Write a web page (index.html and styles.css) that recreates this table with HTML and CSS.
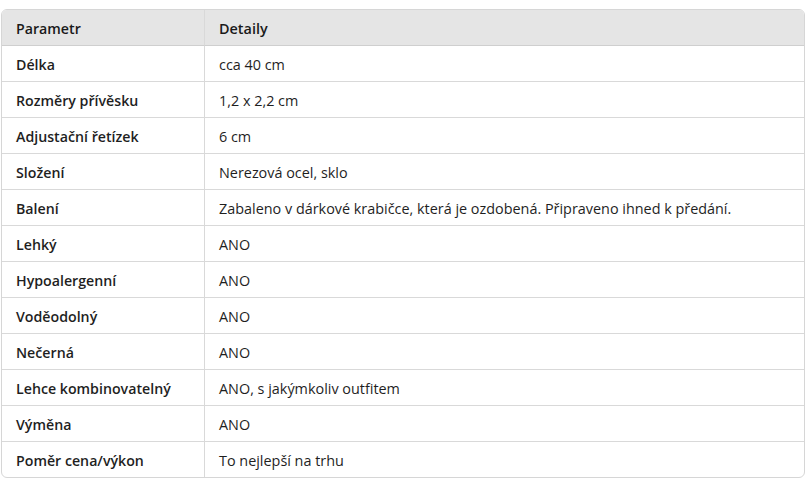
FILE: index.html
```html
<!DOCTYPE html>
<html lang="cs">
<head>
<meta charset="utf-8">
<link rel="stylesheet" href="styles.css">
</head>
<body>
<div class="wrap">
<table class="spec">
<thead>
<tr><th class="c1">Parametr</th><th>Detaily</th></tr>
</thead>
<tbody>
<tr><td class="c1">Délka</td><td>cca 40 cm</td></tr>
<tr><td class="c1">Rozměry přívěsku</td><td>1,2 x 2,2 cm</td></tr>
<tr><td class="c1">Adjustační řetízek</td><td>6 cm</td></tr>
<tr><td class="c1">Složení</td><td>Nerezová ocel, sklo</td></tr>
<tr><td class="c1">Balení</td><td>Zabaleno v dárkové krabičce, která je ozdobená. Připraveno ihned k předání.</td></tr>
<tr><td class="c1">Lehký</td><td>ANO</td></tr>
<tr><td class="c1">Hypoalergenní</td><td>ANO</td></tr>
<tr><td class="c1">Voděodolný</td><td>ANO</td></tr>
<tr><td class="c1">Nečerná</td><td>ANO</td></tr>
<tr><td class="c1">Lehce kombinovatelný</td><td>ANO, s jakýmkoliv outfitem</td></tr>
<tr><td class="c1">Výměna</td><td>ANO</td></tr>
<tr><td class="c1">Poměr cena/výkon</td><td>To nejlepší na trhu</td></tr>
</tbody>
</table>
</div>
</body>
</html>
```
FILE: styles.css
```css
html, body {
  margin: 0;
  padding: 0;
  background: #ffffff;
}
body {
  font-family: "Open Sans", "Noto Sans", sans-serif;
  font-size: 14.4px;
  color: #1f1f1f;
}
.wrap {
  padding: 9px 2px 0 1px;
}
.spec {
  width: 804px;
  border-collapse: separate;
  border-spacing: 0;
  border: 1px solid #d6d6d6;
  border-radius: 6px;
  overflow: hidden;
  table-layout: fixed;
}
.spec th, .spec td {
  height: 36px;
  padding: 2px 0 0 14px;
  text-align: left;
  vertical-align: middle;
  border-bottom: 1px solid #d9d9d9;
  box-sizing: border-box;
  line-height: 18px;
}
.spec tbody tr:last-child td {
  border-bottom: none;
  height: 35px;
}
.spec th {
  background: #e5e5e5;
  font-weight: 600;
  color: #1a1a1a;
  border-bottom-color: #cfcfcf;
}
.spec .c1 {
  width: 203px;
  border-right: 1px solid #d9d9d9;
  font-weight: 600;
  font-size: 14.2px;
}
```
